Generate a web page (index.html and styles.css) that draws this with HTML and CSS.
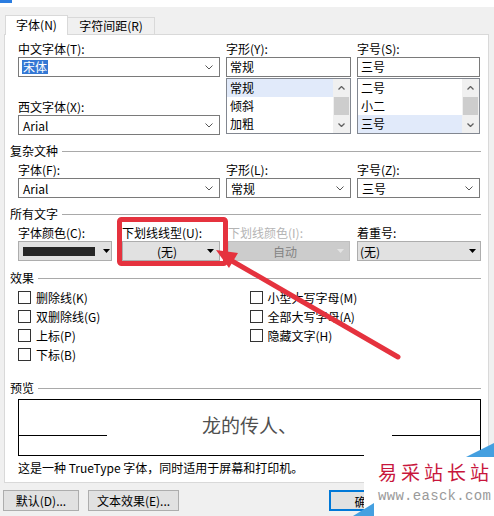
FILE: index.html
```html
<!DOCTYPE html>
<html lang="zh-CN">
<head>
    <meta charset="UTF-8">
    <meta name="viewport" content="width=device-width, initial-scale=1.0">
    <title>字体</title>
    <link rel="stylesheet" href="styles.css">
</head>
<body>
    <div class="titlebar"><span class="title-accent"></span></div>

    <div class="tabs">
        <div class="tab active">字体(N)</div>
        <div class="tab">字符间距(R)</div>
    </div>

    <div class="panel">
        <div class="font-grid">
            <div class="col">
                <label>中文字体(T):</label>
                <div class="combo">
                    <span class="picked">宋体</span>
                    <svg class="chev" width="8" height="5" viewBox="0 0 8 5"><polyline points="0.5,0.5 4,4 7.5,0.5" fill="none" stroke="#555"/></svg>
                </div>
                <label class="gap-label">西文字体(X):</label>
                <div class="combo">
                    <span>Arial</span>
                    <svg class="chev" width="8" height="5" viewBox="0 0 8 5"><polyline points="0.5,0.5 4,4 7.5,0.5" fill="none" stroke="#555"/></svg>
                </div>
            </div>
            <div class="col">
                <label>字形(Y):</label>
                <div class="textbox">常规</div>
                <div class="listbox">
                    <div class="items">
                        <div class="item sel">常规</div>
                        <div class="item">倾斜</div>
                        <div class="item">加粗</div>
                    </div>
                    <div class="scrollbar">
                        <div class="sb-btn"><svg width="7" height="4" viewBox="0 0 7 4"><polyline points="0.5,3.5 3.5,0.5 6.5,3.5" fill="none" stroke="#606060" stroke-width="1.3"/></svg></div>
                        <div class="sb-track"><div class="sb-thumb"></div></div>
                        <div class="sb-btn"><svg width="7" height="4" viewBox="0 0 7 4"><polyline points="0.5,0.5 3.5,3.5 6.5,0.5" fill="none" stroke="#606060" stroke-width="1.3"/></svg></div>
                    </div>
                </div>
            </div>
            <div class="col">
                <label>字号(S):</label>
                <div class="textbox">三号</div>
                <div class="listbox">
                    <div class="items">
                        <div class="item">二号</div>
                        <div class="item">小二</div>
                        <div class="item sel">三号</div>
                    </div>
                    <div class="scrollbar">
                        <div class="sb-btn"><svg width="7" height="4" viewBox="0 0 7 4"><polyline points="0.5,3.5 3.5,0.5 6.5,3.5" fill="none" stroke="#606060" stroke-width="1.3"/></svg></div>
                        <div class="sb-track"><div class="sb-thumb"></div></div>
                        <div class="sb-btn"><svg width="7" height="4" viewBox="0 0 7 4"><polyline points="0.5,0.5 3.5,3.5 6.5,0.5" fill="none" stroke="#606060" stroke-width="1.3"/></svg></div>
                    </div>
                </div>
            </div>
        </div>

        <div class="group">复杂文种</div>
        <div class="font-grid">
            <div class="col">
                <label class="top-label">字体(F):</label>
                <div class="combo">
                    <span>Arial</span>
                    <svg class="chev" width="8" height="5" viewBox="0 0 8 5"><polyline points="0.5,0.5 4,4 7.5,0.5" fill="none" stroke="#555"/></svg>
                </div>
            </div>
            <div class="col">
                <label class="top-label">字形(L):</label>
                <div class="combo">
                    <span>常规</span>
                    <svg class="chev" width="8" height="5" viewBox="0 0 8 5"><polyline points="0.5,0.5 4,4 7.5,0.5" fill="none" stroke="#555"/></svg>
                </div>
            </div>
            <div class="col">
                <label class="top-label">字号(Z):</label>
                <div class="combo">
                    <span>三号</span>
                    <svg class="chev" width="8" height="5" viewBox="0 0 8 5"><polyline points="0.5,0.5 4,4 7.5,0.5" fill="none" stroke="#555"/></svg>
                </div>
            </div>
        </div>

        <div class="group">所有文字</div>
        <div class="all-row">
            <div class="c-color">
                <label class="top-label">字体颜色(C):</label>
                <div class="dd dd-color">
                    <span class="swatch"></span>
                    <svg width="7" height="4" viewBox="0 0 7 4"><polygon points="0,0 7,0 3.5,4" fill="#000"/></svg>
                </div>
            </div>
            <div class="c-under">
                <label class="top-label">下划线线型(U):</label>
                <div class="dd dd-under">
                    <span class="val">(无)</span>
                    <svg width="7" height="4" viewBox="0 0 7 4"><polygon points="0,0 7,0 3.5,4" fill="#000"/></svg>
                </div>
            </div>
            <div class="c-ucolor">
                <label class="top-label off">下划线颜色(I):</label>
                <div class="dd dd-off">
                    <span class="val">自动</span>
                    <svg width="7" height="4" viewBox="0 0 7 4"><polygon points="0,0 7,0 3.5,4" fill="#e4e4e4"/></svg>
                </div>
            </div>
            <div class="c-emph">
                <label class="top-label">着重号:</label>
                <div class="dd dd-emph">
                    <span class="val">(无)</span>
                    <svg width="7" height="4" viewBox="0 0 7 4"><polygon points="0,0 7,0 3.5,4" fill="#000"/></svg>
                </div>
            </div>
        </div>

        <div class="group effects-head">效果</div>
        <div class="checks">
            <div class="check-col">
                <div class="check"><span class="box"></span>删除线(K)</div>
                <div class="check"><span class="box"></span>双删除线(G)</div>
                <div class="check"><span class="box"></span>上标(P)</div>
                <div class="check"><span class="box"></span>下标(B)</div>
            </div>
            <div class="check-col">
                <div class="check"><span class="box"></span>小型大写字母(M)</div>
                <div class="check"><span class="box"></span>全部大写字母(A)</div>
                <div class="check"><span class="box"></span>隐藏文字(H)</div>
            </div>
        </div>

        <div class="group preview-head">预览</div>
        <div class="preview">
            <span class="base-line"></span>
            <span class="sample">龙的传人、</span>
            <span class="base-line"></span>
        </div>
        <p class="desc">这是一种 TrueType 字体，同时适用于屏幕和打印机。</p>
    </div>

    <div class="buttons">
        <button class="btn btn-default-font">默认(D)...</button>
        <button class="btn btn-effects">文本效果(E)...</button>
        <button class="btn btn-ok">确定</button>
    </div>

    <!-- red annotation drawn over the dialog -->
    <svg class="annot" width="494" height="516" viewBox="0 0 494 516">
        <rect x="119.5" y="219.5" width="106" height="44" rx="2" fill="none" stroke="#e5323e" stroke-width="5"/>
        <line x1="232" y1="261" x2="398" y2="357" stroke="#e5323e" stroke-width="5" stroke-linecap="round"/>
        <polygon points="216,250 238,253 229,268" fill="#e5323e"/>
    </svg>

    <div class="watermark">
        <svg class="wm-bg" width="144" height="76" viewBox="0 0 144 76">
            <polygon points="14,13 144,13 144,76 14,76" fill="#fff"/>
            <polygon points="116,17 144,3 144,17" fill="#45a0e0"/>
            <polygon points="3,76 24,63 24,76" fill="#45a0e0"/>
        </svg>
        <div class="wm-name">易采站长站</div>
        <div class="wm-url">www.easck.com</div>
    </div>
</body>
</html>
```

FILE: styles.css
```css
body {
    margin: 0;
    width: 494px;
    height: 516px;
    overflow: hidden;
    position: relative;
    background-color: #f0f0f0;
    font-family: "Noto Sans CJK SC", sans-serif;
    font-size: 12px;
    color: #000;
}
.titlebar {
    height: 7px;
    background-color: #fff;
}
.title-accent {
    display: block;
    width: 12px;
    height: 3px;
    background-color: #2b7de0;
}
.tabs {
    display: flex;
    align-items: flex-end;
    height: 19px;
    padding: 8px 0 0 5px;
    position: relative;
    z-index: 1;
}
.tab {
    height: 17px;
    box-sizing: border-box;
    border: 1px solid #d9d9d9;
    border-bottom: none;
    border-left: none;
    background-color: #f0f0f0;
    line-height: 16px;
    width: 87px;
    text-align: center;
}
.tab.active {
    height: 20px;
    width: 63px;
    margin-bottom: -1px;
    border-left: 1px solid #d9d9d9;
    background-color: #fff;
    line-height: 18px;
}
.panel {
    margin-left: 4px;
    width: 485px;
    box-sizing: border-box;
    border: 1px solid #d9d9d9;
    background-color: #fff;
    padding: 6px 7px 6px 13px;
}
label {
    display: block;
    height: 16px;
    line-height: 16px;
    white-space: nowrap;
}
.gap-label {
    margin-top: 22px;
}
.top-label {
    margin-top: 3px;
}
label.off {
    color: #b4b4b4;
}
.font-grid {
    display: grid;
    grid-template-columns: 202px 125px 123px;
    column-gap: 6px;
}
.col {
    display: flex;
    flex-direction: column;
}
.combo {
    height: 20px;
    box-sizing: border-box;
    border: 1px solid #7a7a7a;
    background-color: #fff;
    display: flex;
    align-items: center;
    justify-content: space-between;
    padding: 0 6px 0 4px;
    white-space: nowrap;
}
.picked {
    background-color: #3478d4;
    color: #fff;
    line-height: 14px;
    padding: 0 1px;
    margin-left: -1px;
}
.textbox {
    height: 20px;
    box-sizing: border-box;
    border: 1px solid #7a7a7a;
    line-height: 18px;
    padding-left: 3px;
}
.listbox {
    height: 56px;
    box-sizing: border-box;
    margin-top: 1px;
    border: 1px solid #828790;
    display: flex;
}
.items {
    flex: 1;
}
.item {
    height: 18px;
    line-height: 18px;
    padding-left: 3px;
}
.item.sel {
    background-color: #e1eafa;
}
.scrollbar {
    width: 17px;
    background-color: #f0f0f0;
    display: flex;
    flex-direction: column;
}
.sb-btn {
    height: 17px;
    display: flex;
    align-items: center;
    justify-content: center;
}
.sb-track {
    flex: 1;
    padding: 1px 1px 0 1px;
}
.sb-thumb {
    height: 18px;
    background-color: #cdcdcd;
}
.group {
    display: flex;
    align-items: center;
    gap: 4px;
    height: 16px;
    line-height: 16px;
    margin: 8px 0 0 -8px;
    white-space: nowrap;
}
.group::after {
    content: "";
    flex: 1;
    border-top: 1px solid #a9a9a9;
}
.effects-head {
    margin-top: 9px;
}
.preview-head {
    margin-top: 16px;
}
.all-row {
    display: flex;
}
.c-color {
    width: 94px;
}
.c-under {
    width: 98px;
    margin-left: 10px;
}
.c-ucolor {
    width: 122px;
    margin-left: 8px;
}
.c-emph {
    flex: 1;
    margin-left: 7px;
}
.dd {
    height: 20px;
    box-sizing: border-box;
    border: 1px solid #adadad;
    background-color: #e1e1e1;
    display: flex;
    align-items: center;
    padding: 0 5px 0 4px;
    white-space: nowrap;
}
.dd .val {
    flex: 1;
    text-align: center;
}
.dd-color {
    justify-content: space-between;
    padding-right: 1px;
}
.swatch {
    width: 72px;
    height: 9px;
    background-color: #262626;
}
.dd-off {
    background-color: #cccccc;
    border-color: #bfbfbf;
    color: #838383;
}
.dd-emph {
    padding: 0 4px 0 2px;
}
.dd-emph .val {
    text-align: left;
}
.checks {
    display: flex;
    margin-top: 2px;
}
.check-col {
    width: 232px;
}
.check {
    display: flex;
    align-items: center;
    gap: 5px;
    height: 19px;
    white-space: nowrap;
}
.box {
    width: 13px;
    height: 13px;
    box-sizing: border-box;
    border: 1px solid #333;
    background-color: #fff;
}
.preview {
    display: flex;
    height: 57px;
    margin-top: 3px;
    box-sizing: border-box;
    border: 1px solid #000;
}
.base-line {
    width: 88px;
    height: 1px;
    margin-top: 35px;
    background-color: #000;
}
.sample {
    flex: 1;
    text-align: center;
    font-size: 19px;
    line-height: 22px;
    margin-top: 14px;
    color: #505050;
}
.desc {
    margin: 4px 0 0 0;
    height: 16px;
    line-height: 16px;
    white-space: nowrap;
}
.buttons {
    display: flex;
    padding: 7px 0 0 3px;
}
.btn {
    height: 21px;
    box-sizing: border-box;
    border: 1px solid #adadad;
    background-color: #e1e1e1;
    font-family: "Noto Sans CJK SC", sans-serif;
    font-size: 12px;
    line-height: 19px;
    padding: 0;
    color: #000;
}
.btn-default-font {
    width: 76px;
}
.btn-effects {
    width: 91px;
    margin-left: 9px;
}
.btn-ok {
    width: 75px;
    margin-left: 150px;
    border: 2px solid #0078d7;
}
.annot {
    position: absolute;
    left: 0;
    top: 0;
    pointer-events: none;
}
.watermark {
    position: absolute;
    left: 350px;
    top: 440px;
    width: 144px;
    height: 76px;
    box-sizing: border-box;
    padding: 20px 0 0 28px;
}
.wm-bg {
    position: absolute;
    left: 0;
    top: 0;
}
.wm-name {
    position: relative;
    font-size: 19px;
    line-height: 24px;
    letter-spacing: 4px;
    margin-right: -4px;
    color: #c8163c;
    white-space: nowrap;
}
.wm-url {
    position: relative;
    margin-top: 4px;
    font-family: "Liberation Mono", monospace;
    font-size: 14px;
    line-height: 16px;
    letter-spacing: 0.3px;
    color: #9a9a9a;
    white-space: nowrap;
}
```
